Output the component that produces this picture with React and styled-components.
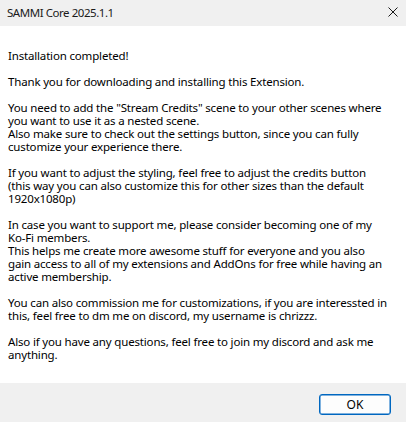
import React from 'react';
import styled, { createGlobalStyle } from 'styled-components';

const GlobalStyle = createGlobalStyle`
  html, body {
    margin: 0;
    padding: 0;
    background: #ffffff;
  }
  * {
    box-sizing: border-box;
  }
`;

const paragraphs = [
  ['Installation completed!'],
  ['Thank you for downloading and installing this Extension.'],
  [
    'You need to add the "Stream Credits" scene to your other scenes where',
    'you want to use it as a nested scene.',
    'Also make sure to check out the settings button, since you can fully',
    'customize your experience there.',
  ],
  [
    'If you want to adjust the styling, feel free to adjust the credits button',
    '(this way you can also customize this for other sizes than the default',
    '1920x1080p)',
  ],
  [
    'In case you want to support me, please consider becoming one of my',
    'Ko-Fi members.',
    'This helps me create more awesome stuff for everyone and you also',
    'gain access to all of my extensions and AddOns for free while having an',
    'active membership.',
  ],
  [
    'You can also commission me for customizations, if you are interessted in',
    'this, feel free to dm me on discord, my username is chrizzz.',
  ],
  [
    'Also if you have any questions, feel free to join my discord and ask me',
    'anything.',
  ],
];

export default function App() {
  return (
    <>
      <GlobalStyle />
      <Dialog>
        <TitleBar>
          <Title>SAMMI Core 2025.1.1</Title>
          <CloseButton aria-label="Close">
            <svg width="10" height="10" viewBox="0 0 10 10">
              <path d="M0.5 0.5 L9.5 9.5 M9.5 0.5 L0.5 9.5" stroke="#1a1a1a" strokeWidth="1" />
            </svg>
          </CloseButton>
        </TitleBar>
        <Body>
          {paragraphs.map((lines, i) => (
            <Paragraph key={i}>
              {lines.map((line, j) => (
                <Line key={j}>{line}</Line>
              ))}
            </Paragraph>
          ))}
        </Body>
        <Footer>
          <OkButton type="button">OK</OkButton>
        </Footer>
      </Dialog>
    </>
  );
}

const Dialog = styled.div`
  width: 406px;
  height: 422px;
  display: flex;
  flex-direction: column;
  background: #ffffff;
  font-family: 'Noto Sans', 'Open Sans', sans-serif;
  color: #000000;
`;

const TitleBar = styled.div`
  height: 26px;
  flex-shrink: 0;
  background: #f0f0f0;
  display: flex;
  align-items: center;
  justify-content: space-between;
  padding: 0 3px 2px 7px;
`;

const Title = styled.span`
  font-size: 11.5px;
  letter-spacing: -0.45px;
  color: #1a1a1a;
`;

const CloseButton = styled.div`
  width: 20px;
  height: 20px;
  display: flex;
  align-items: center;
  justify-content: center;
`;

const Body = styled.div`
  flex: 1;
  padding: 23px 8px 0 8px;
  display: flex;
  flex-direction: column;
  gap: 13px;
`;

const Paragraph = styled.div`
  display: flex;
  flex-direction: column;
`;

const Line = styled.div`
  font-size: 11.5px;
  letter-spacing: -0.17px;
  line-height: 13px;
  white-space: nowrap;
`;

const Footer = styled.div`
  height: 39px;
  flex-shrink: 0;
  background: #f0f0f0;
  display: flex;
  justify-content: flex-end;
  align-items: flex-start;
  padding: 11px 15px 0 0;
`;

const OkButton = styled.button`
  width: 72px;
  height: 21px;
  background: #fdfdfd;
  border: 1px solid #0067c0;
  border-radius: 3px;
  font-family: 'Noto Sans', 'Open Sans', sans-serif;
  font-size: 12px;
  color: #000000;
  padding: 0;
  box-shadow: inset 0 0 0 0.5px #0067c0;
`;
